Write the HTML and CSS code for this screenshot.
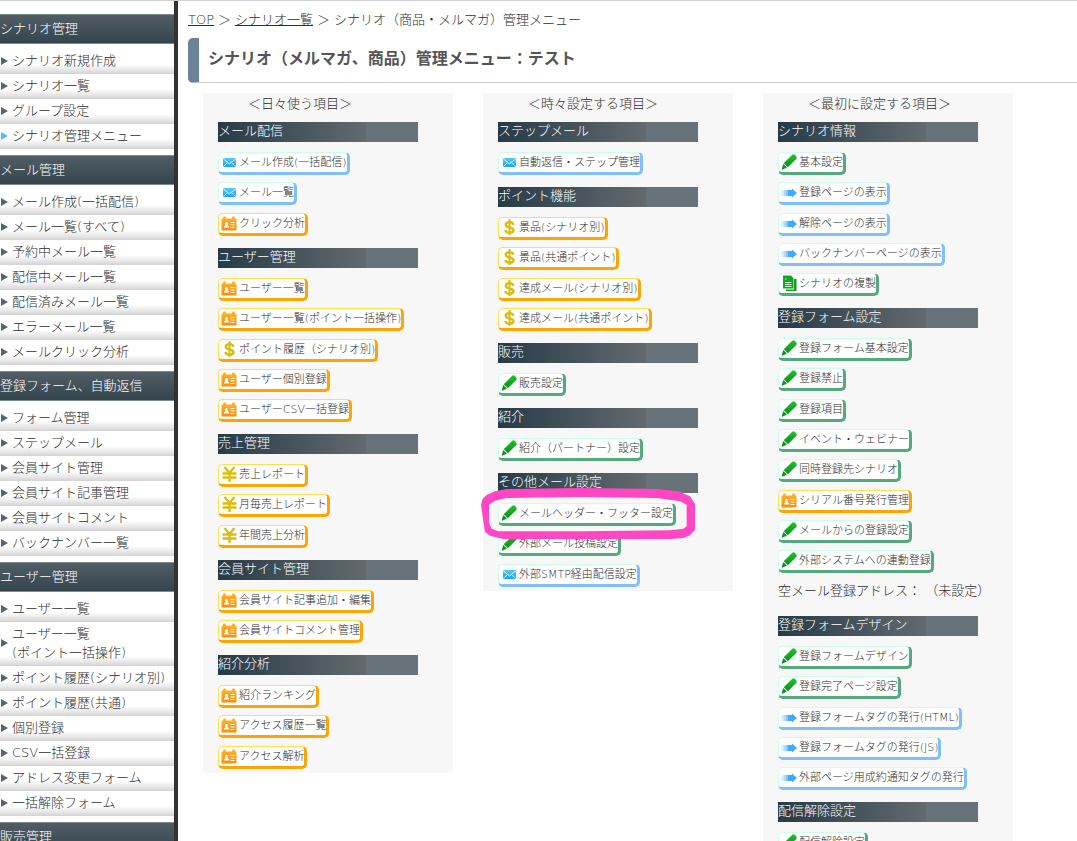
FILE: index.html
```html
<!DOCTYPE html>
<html lang="ja">
<head>
<meta charset="utf-8">
<title>シナリオ（商品・メルマガ）管理メニュー</title>
<link rel="stylesheet" href="styles.css">
</head>
<body>
<svg class="sprite" aria-hidden="true">
  <defs>
    <linearGradient id="g-orange" x1="0" y1="0" x2="0" y2="1"><stop offset="0" stop-color="#ffb52e"/><stop offset="1" stop-color="#ff8c0a"/></linearGradient>
    <linearGradient id="g-mail" x1="0" y1="0" x2="0" y2="1"><stop offset="0" stop-color="#5cc8f2"/><stop offset="1" stop-color="#1da4ee"/></linearGradient>
    <linearGradient id="g-green" x1="0" y1="0" x2="0" y2="1"><stop offset="0" stop-color="#1fc32c"/><stop offset="1" stop-color="#0a8f1c"/></linearGradient>
  </defs>
  <symbol id="i-mail" viewBox="0 0 16 16">
    <rect x="2" y="4" width="13" height="9" rx="1" fill="url(#g-mail)"/>
    <path d="M2.500 5 8.500 9.800 14.500 5M2.500 12.500 6.500 8.500M14.500 12.500 10.500 8.500" fill="none" stroke="#e4f6ff" stroke-width="1"/>
  </symbol>
  <symbol id="i-pen" viewBox="0 0 16 16">
    <path d="M11 1Q12.500-.300 14 1L15.300 2.500Q16.300 4 15 5.300L6.800 13.300 2.700 9.200z" fill="url(#g-green)"/>
    <path d="M2.400 10.100 5.900 13.600 4.500 14.300 1.200 15.700.700 15.200 1.600 12z" fill="#0b941d"/>
    <path d="M2.800 9.700 6.300 13.200" stroke="#fff" stroke-width=".5"/>
  </symbol>
  <symbol id="i-card" viewBox="0 0 16 16">
    <path d="M.500 4.500Q.500 3.500 2 3.500V2.500Q3.500 0 5 2.500V3.500H11V2.500Q12.500 0 14 2.500V3.500Q15.500 3.500 15.500 4.500V15Q15.500 15.500 15 15.500H1Q.500 15.500.500 15z" fill="url(#g-orange)"/>
    <path d="M3 12.500V11.500Q4 10.500 4.500 10.500 3.500 7 5.500 7T6.500 10.500Q8 10.500 8 11.500V12.500zM9.500 7H13.500V8H9.500zM9.500 9.500H13.500V10.500H9.500zM9.500 12H13.500V13H9.500z" fill="#fff"/>
  </symbol>
  <symbol id="i-dollar" viewBox="0 0 16 16">
    <path d="M12.200 5.800Q12 3.300 8.500 3.300 4.800 3.300 4.800 5.800 4.800 7.700 8.500 8.400 12.500 9.200 12.500 11.300 12.500 13.700 8.500 13.700 4.700 13.700 4.500 11" fill="none" stroke="#d9bd13" stroke-width="2.500"/>
    <path d="M8.500 0V16" stroke="#d9bd13" stroke-width="2"/>
  </symbol>
  <symbol id="i-yen" viewBox="0 0 16 16">
    <path d="M3.500 1 8.500 7 13.500 1M8.500 7V16M1.500 7.500H15.500M1.500 11.500H15.500" fill="none" stroke="#d9bd13" stroke-width="2.300"/>
  </symbol>
  <symbol id="i-arrow" viewBox="0 0 16 16">
    <path d="M.500 6H2.500V12H.500z" fill="#d6ebff"/>
    <path d="M2.500 6H4.500V12H2.500z" fill="#b4daff"/>
    <path d="M4.500 6H6.500V12H4.500z" fill="#86c7ff"/>
    <path d="M6.500 6H11V4.500L16 9 11 13.500V12H6.500z" fill="#3fabfa"/>
  </symbol>
  <symbol id="i-copy" viewBox="0 0 16 16">
    <path d="M13 4H15.500V16H5V14.500H13z" fill="#129c24"/>
    <path d="M2 .500H10L12.500 3V13.500H2z" fill="#0ea922"/>
    <path d="M4 3.500H5.500V4.500H4zM4 7H10.500V8H4zM4 9H10.500V10H4zM4 11H10.500V12H4z" fill="#d8f5da"/>
  </symbol>
</svg>
<div class="page">
  <nav class="sidebar">
    <h2 class="side-title">シナリオ管理</h2>
    <ul class="side-list">
      <li><a href="#">シナリオ新規作成</a></li>
      <li><a href="#">シナリオ一覧</a></li>
      <li><a href="#">グループ設定</a></li>
      <li><a href="#" class="current">シナリオ管理メニュー</a></li>
    </ul>
    <h2 class="side-title">メール管理</h2>
    <ul class="side-list">
      <li><a href="#">メール作成(一括配信)</a></li>
      <li><a href="#">メール一覧(すべて)</a></li>
      <li><a href="#">予約中メール一覧</a></li>
      <li><a href="#">配信中メール一覧</a></li>
      <li><a href="#">配信済みメール一覧</a></li>
      <li><a href="#">エラーメール一覧</a></li>
      <li><a href="#">メールクリック分析</a></li>
    </ul>
    <h2 class="side-title">登録フォーム、自動返信</h2>
    <ul class="side-list">
      <li><a href="#">フォーム管理</a></li>
      <li><a href="#">ステップメール</a></li>
      <li><a href="#">会員サイト管理</a></li>
      <li><a href="#">会員サイト記事管理</a></li>
      <li><a href="#">会員サイトコメント</a></li>
      <li><a href="#">バックナンバー一覧</a></li>
    </ul>
    <h2 class="side-title">ユーザー管理</h2>
    <ul class="side-list">
      <li><a href="#">ユーザー一覧</a></li>
      <li><a href="#">ユーザー一覧<br>(ポイント一括操作)</a></li>
      <li><a href="#">ポイント履歴(シナリオ別)</a></li>
      <li><a href="#">ポイント履歴(共通)</a></li>
      <li><a href="#">個別登録</a></li>
      <li><a href="#">CSV一括登録</a></li>
      <li><a href="#">アドレス変更フォーム</a></li>
      <li><a href="#">一括解除フォーム</a></li>
    </ul>
    <h2 class="side-title">販売管理</h2>
  </nav>
  <main class="main">
    <div class="breadcrumb"><a href="#">TOP</a><span>＞</span><a href="#">シナリオ一覧</a><span>＞</span><span>シナリオ（商品・メルマガ）管理メニュー</span></div>
    <h1 class="title">シナリオ（メルマガ、商品）管理メニュー：テスト</h1>
    <div class="columns">
      <section class="column">
        <p class="caption">＜日々使う項目＞</p>
        <h3 class="bar">メール配信</h3>
        <ul class="links">
          <li><a class="btn blue" href="#"><svg class="icon"><use href="#i-mail"/></svg>メール作成(一括配信)</a></li>
          <li><a class="btn blue" href="#"><svg class="icon"><use href="#i-mail"/></svg>メール一覧</a></li>
          <li><a class="btn orange" href="#"><svg class="icon"><use href="#i-card"/></svg>クリック分析</a></li>
        </ul>
        <h3 class="bar">ユーザー管理</h3>
        <ul class="links">
          <li><a class="btn orange" href="#"><svg class="icon"><use href="#i-card"/></svg>ユーザー一覧</a></li>
          <li><a class="btn orange" href="#"><svg class="icon"><use href="#i-card"/></svg>ユーザー一覧(ポイント一括操作)</a></li>
          <li><a class="btn orange" href="#"><svg class="icon"><use href="#i-dollar"/></svg>ポイント履歴（シナリオ別)</a></li>
          <li><a class="btn orange" href="#"><svg class="icon"><use href="#i-card"/></svg>ユーザー個別登録</a></li>
          <li><a class="btn orange" href="#"><svg class="icon"><use href="#i-card"/></svg>ユーザーCSV一括登録</a></li>
        </ul>
        <h3 class="bar">売上管理</h3>
        <ul class="links">
          <li><a class="btn orange" href="#"><svg class="icon"><use href="#i-yen"/></svg>売上レポート</a></li>
          <li><a class="btn orange" href="#"><svg class="icon"><use href="#i-yen"/></svg>月毎売上レポート</a></li>
          <li><a class="btn orange" href="#"><svg class="icon"><use href="#i-yen"/></svg>年間売上分析</a></li>
        </ul>
        <h3 class="bar">会員サイト管理</h3>
        <ul class="links">
          <li><a class="btn orange" href="#"><svg class="icon"><use href="#i-card"/></svg>会員サイト記事追加・編集</a></li>
          <li><a class="btn orange" href="#"><svg class="icon"><use href="#i-card"/></svg>会員サイトコメント管理</a></li>
        </ul>
        <h3 class="bar">紹介分析</h3>
        <ul class="links">
          <li><a class="btn orange" href="#"><svg class="icon"><use href="#i-card"/></svg>紹介ランキング</a></li>
          <li><a class="btn orange" href="#"><svg class="icon"><use href="#i-card"/></svg>アクセス履歴一覧</a></li>
          <li><a class="btn orange" href="#"><svg class="icon"><use href="#i-card"/></svg>アクセス解析</a></li>
        </ul>
      </section>
      <section class="column">
        <p class="caption">＜時々設定する項目＞</p>
        <h3 class="bar">ステップメール</h3>
        <ul class="links">
          <li><a class="btn blue" href="#"><svg class="icon"><use href="#i-mail"/></svg>自動返信・ステップ管理</a></li>
        </ul>
        <h3 class="bar">ポイント機能</h3>
        <ul class="links">
          <li><a class="btn orange" href="#"><svg class="icon"><use href="#i-dollar"/></svg>景品(シナリオ別)</a></li>
          <li><a class="btn orange" href="#"><svg class="icon"><use href="#i-dollar"/></svg>景品(共通ポイント)</a></li>
          <li><a class="btn orange" href="#"><svg class="icon"><use href="#i-dollar"/></svg>達成メール(シナリオ別)</a></li>
          <li><a class="btn orange" href="#"><svg class="icon"><use href="#i-dollar"/></svg>達成メール(共通ポイント)</a></li>
        </ul>
        <h3 class="bar">販売</h3>
        <ul class="links">
          <li><a class="btn green" href="#"><svg class="icon"><use href="#i-pen"/></svg>販売設定</a></li>
        </ul>
        <h3 class="bar">紹介</h3>
        <ul class="links">
          <li><a class="btn green" href="#"><svg class="icon"><use href="#i-pen"/></svg>紹介（パートナー）設定</a></li>
        </ul>
        <h3 class="bar">その他メール設定</h3>
        <ul class="links">
          <li class="marked">
            <a class="btn green" href="#"><svg class="icon"><use href="#i-pen"/></svg>メールヘッダー・フッター設定</a>
            <svg class="marker" viewBox="33 140 642 153" aria-hidden="true"><path fill="#ff47c4" fill-rule="evenodd" d="M33 190 38 172 50 161 75 150 110 143 330 140 560 143 625 150 660 165 675 188V265L660 282 640 290 600 293H100L60 283 45 272 40 240zM57 190V245L65 262 85 270H330L600 267 640 262 650 255V190L630 180 560 170 330 167 110 170 75 178z"/></svg>
          </li>
          <li><a class="btn green" href="#"><svg class="icon"><use href="#i-pen"/></svg>外部メール投稿設定</a></li>
          <li><a class="btn blue" href="#"><svg class="icon"><use href="#i-mail"/></svg>外部SMTP経由配信設定</a></li>
        </ul>
      </section>
      <section class="column">
        <p class="caption">＜最初に設定する項目＞</p>
        <h3 class="bar">シナリオ情報</h3>
        <ul class="links">
          <li><a class="btn green" href="#"><svg class="icon"><use href="#i-pen"/></svg>基本設定</a></li>
          <li><a class="btn blue" href="#"><svg class="icon"><use href="#i-arrow"/></svg>登録ページの表示</a></li>
          <li><a class="btn blue" href="#"><svg class="icon"><use href="#i-arrow"/></svg>解除ページの表示</a></li>
          <li><a class="btn blue" href="#"><svg class="icon"><use href="#i-arrow"/></svg>バックナンバーページの表示</a></li>
          <li><a class="btn green" href="#"><svg class="icon"><use href="#i-copy"/></svg>シナリオの複製</a></li>
        </ul>
        <h3 class="bar">登録フォーム設定</h3>
        <ul class="links">
          <li><a class="btn green" href="#"><svg class="icon"><use href="#i-pen"/></svg>登録フォーム基本設定</a></li>
          <li><a class="btn green" href="#"><svg class="icon"><use href="#i-pen"/></svg>登録禁止</a></li>
          <li><a class="btn green" href="#"><svg class="icon"><use href="#i-pen"/></svg>登録項目</a></li>
          <li><a class="btn green" href="#"><svg class="icon"><use href="#i-pen"/></svg>イベント・ウェビナー</a></li>
          <li><a class="btn green" href="#"><svg class="icon"><use href="#i-pen"/></svg>同時登録先シナリオ</a></li>
          <li><a class="btn orange" href="#"><svg class="icon"><use href="#i-card"/></svg>シリアル番号発行管理</a></li>
          <li><a class="btn green" href="#"><svg class="icon"><use href="#i-pen"/></svg>メールからの登録設定</a></li>
          <li><a class="btn green" href="#"><svg class="icon"><use href="#i-pen"/></svg>外部システムへの連動登録</a></li>
          <li class="note">空メール登録アドレス： （未設定）</li>
        </ul>
        <h3 class="bar">登録フォームデザイン</h3>
        <ul class="links">
          <li><a class="btn green" href="#"><svg class="icon"><use href="#i-pen"/></svg>登録フォームデザイン</a></li>
          <li><a class="btn green" href="#"><svg class="icon"><use href="#i-pen"/></svg>登録完了ページ設定</a></li>
          <li><a class="btn blue" href="#"><svg class="icon"><use href="#i-arrow"/></svg>登録フォームタグの発行(HTML)</a></li>
          <li><a class="btn blue" href="#"><svg class="icon"><use href="#i-arrow"/></svg>登録フォームタグの発行(JS)</a></li>
          <li><a class="btn blue" href="#"><svg class="icon"><use href="#i-arrow"/></svg>外部ページ用成約通知タグの発行</a></li>
        </ul>
        <h3 class="bar">配信解除設定</h3>
        <ul class="links">
          <li><a class="btn green" href="#"><svg class="icon"><use href="#i-pen"/></svg>配信解除設定</a></li>
        </ul>
      </section>
    </div>
  </main>
</div>
</body>
</html>
```

FILE: styles.css
```css
* {
  box-sizing: border-box;
}

body {
  margin: 0;
  background: #fff;
  color: #2e2e2e;
  font-family: "DejaVu Sans", "Noto Sans CJK JP", sans-serif;
  font-size: 13px;
  font-weight: 300;
  line-height: 20px;
}

a {
  color: inherit;
}

ul,
h1,
h2,
h3,
p {
  margin: 0;
  padding: 0;
}

ul {
  list-style: none;
}

.sprite {
  position: absolute;
  width: 0;
  height: 0;
}

.page {
  display: flex;
  height: 100vh;
  overflow: hidden;
  border-top: 1px solid #d0d0d0;
}

/* Sidebar */
.sidebar {
  flex: none;
  width: 178px;
  min-height: 100%;
  padding-top: 13px;
  border-right: 4px solid #333;
  white-space: nowrap;
}

.side-title {
  height: 30px;
  border-top: 1px solid #7b8b8d;
  border-bottom: 1px solid #7b8b8d;
  background: linear-gradient(#525d64, #34454e);
  color: #fff;
  font-size: 13px;
  font-weight: 300;
  line-height: 28px;
}

.side-list {
  padding: 5px 0 6px;
}

.side-list a {
  display: flex;
  align-items: center;
  gap: 4px;
  min-height: 25px;
  padding: 2px 0 4px 1px;
  background: linear-gradient(to top, #d2d2d2 0, #e2e2e2 3px, #fff 10px);
  line-height: 19px;
  text-decoration: none;
}

.side-list a::before {
  content: "";
  border: 4px solid transparent;
  border-left: 7px solid #56646f;
  border-right: 0;
}

.side-list a.current::before {
  border-left-color: #4fc0f5;
}

/* Main */
.main {
  flex: 1;
  min-width: 0;
  padding: 9px 0 0 10px;
}

.breadcrumb {
  display: flex;
  gap: 4px;
}

.title {
  height: 45px;
  margin-top: 8px;
  padding-left: 9px;
  border-bottom: 1px solid #ccc;
  border-left: 11px solid #6b8299;
  border-radius: 5px 0 0 5px;
  color: #555;
  font-size: 16px;
  font-weight: 700;
  line-height: 42px;
}

.columns {
  display: flex;
  align-items: flex-start;
  gap: 30px;
  padding: 10px 0 0 15px;
}

.column {
  flex: none;
  width: 250px;
  padding: 0 15px 4px;
  background: #f7f7f7;
  white-space: nowrap;
}

.caption {
  padding: 1px 0 8px 30px;
}

.bar {
  width: 200px;
  height: 20px;
  background: linear-gradient(to right, #273b47, #636a6e 74%, #677378 74%);
  color: #fff;
  font-size: 13px;
  font-weight: 300;
  line-height: 18px;
}

.links {
  padding: 10px 0 12px;
}

.links:last-child {
  padding-bottom: 0;
}

.links li {
  display: flex;
  height: 23px;
  margin-bottom: 7px;
}

.links li:nth-child(3n) {
  margin-top: 8px;
}

.links li:last-child {
  margin-bottom: 0;
}

.links li:nth-child(3n - 1) {
  margin-bottom: 0;
}

.links li.note {
  height: 23px;
  line-height: 20px;
}

.btn {
  display: flex;
  gap: 2px;
  padding: 0 0 0 2px;
  border: 1px solid;
  border-right-width: 3px;
  border-bottom-width: 3px;
  border-radius: 5px;
  background: #fff;
  font-size: 11px;
  line-height: 19px;
  text-decoration: none;
}

.blue {
  border-color: #ccffe9 #80bfff #80bfff #ccffe9;
}

.green {
  border-color: #ccffe9 #55aa7d #55aa7d #ccffe9;
}

.orange {
  border-color: #ffdf4d #ffa500 #ffa500 #ffdf4d;
}

.icon {
  flex: none;
  width: 16px;
  height: 16px;
  margin-top: 1px;
}

/* Hand-drawn ring around the highlighted entry */
.marked {
  position: relative;
}

.marker {
  position: absolute;
  top: -15px;
  left: -17px;
  z-index: 1;
  width: 214px;
  height: 51px;
  pointer-events: none;
}
```
